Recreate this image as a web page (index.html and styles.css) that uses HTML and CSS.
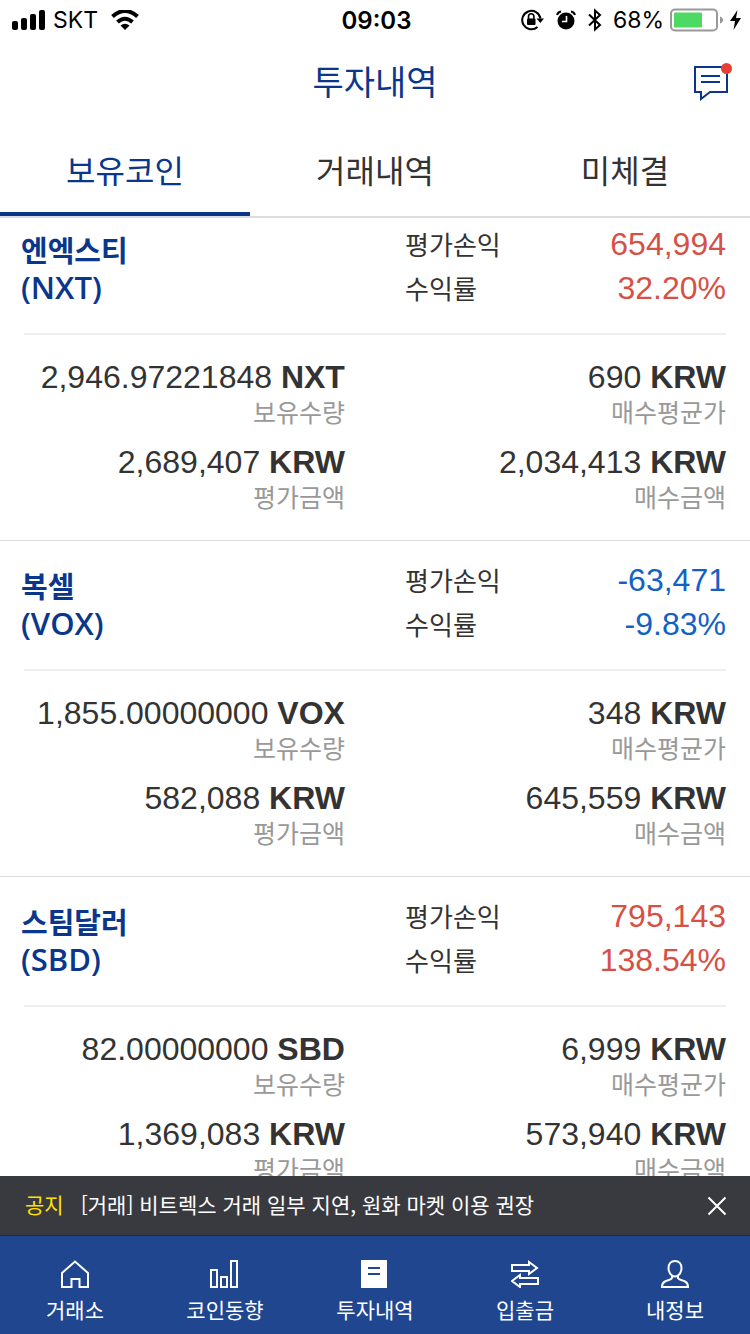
FILE: index.html
```html
<!DOCTYPE html>
<html lang="ko">

<head>
    <meta charset="UTF-8">
    <meta name="viewport" content="width=device-width, initial-scale=1.0">
    <title>투자내역</title>
    <link rel="stylesheet" href="styles.css">
</head>

<body>
    <div class="status">
        <div class="status-left">
            <svg width="34" height="20" viewBox="0 0 34 20">
                <rect x="0" y="11" width="6" height="9" rx="2" />
                <rect x="9" y="8" width="6" height="12" rx="2" />
                <rect x="18" y="4" width="6" height="16" rx="2" />
                <rect x="27" y="0" width="6" height="20" rx="2" />
            </svg>
            <span class="carrier">SKT</span>
            <svg width="28" height="20" viewBox="0 0 28 20">
                <path d="M1.5 6.5Q14-4.500 26.500 6.500M6.500 12Q14 5.500 21.500 12" fill="none" stroke="#000" stroke-width="4" />
                <path d="M9.500 15.500Q14 12 18.500 15.500L14 20z" />
            </svg>
        </div>
        <span class="time">09:03</span>
        <div class="status-right">
            <svg width="23" height="22" viewBox="0 0 23 22">
                <path d="M19.500 9.500A9.200 9.200 0 1 0 16.500 18" fill="none" stroke="#000" stroke-width="2" />
                <path d="M15.500 9.500h7.500l-3.700 4.500z" />
                <rect x="6" y="9.500" width="8.500" height="6.500" rx="1" />
                <path d="M7.500 10V7.500a2.700 2.700 0 0 1 5.400 0V10" fill="none" stroke="#000" stroke-width="1.600" />
            </svg>
            <svg class="alarm" width="20" height="20" viewBox="0 0 20 20">
                <circle cx="10" cy="11" r="8.500" />
                <path d="M1 5Q2 2 5 1.500M15 1.500Q18 2 19 5" fill="none" stroke="#000" stroke-width="2" />
                <path d="M10.500 6v5.500H6" fill="none" stroke="#fff" stroke-width="1.600" />
            </svg>
            <svg width="14" height="24" viewBox="0 0 14 24">
                <path d="M1 6.500l11 10.500-5 4.500v-19l5 4.500L1 17.500" fill="none" stroke="#000" stroke-width="2" />
            </svg>
            <span class="percent">68%</span>
            <svg width="54" height="24" viewBox="0 0 54 24">
                <rect x="1" y="1.500" width="46" height="21" rx="4" fill="none" stroke="#999" stroke-width="2" />
                <rect x="4" y="4.500" width="28" height="15" rx="1" fill="#4cd964" />
                <path d="M50 8.500q3 1 3 3.500t-3 3.500z" fill="#999" />
            </svg>
            <svg width="11" height="20" viewBox="0 0 11 20">
                <path d="M7.500 0L0 11h5L3.500 20 11 8H6z" />
            </svg>
        </div>
    </div>

    <header class="header">
        <h1>투자내역</h1>
        <button class="message" aria-label="메시지">
            <svg width="40" height="40" viewBox="0 0 40 40">
                <path d="M3 6h32v25H18l-9 7v-7H3z" fill="none" stroke="#0a378c" stroke-width="2" />
                <path d="M9 15h19M9 21h19" stroke="#0a378c" stroke-width="2" />
                <circle cx="34.500" cy="7.500" r="5.500" fill="#e93f33" />
            </svg>
        </button>
    </header>

    <div class="tabs">
        <button class="tab active">보유코인</button>
        <button class="tab">거래내역</button>
        <button class="tab">미체결</button>
    </div>

    <main class="content">
        <div class="coins">
            <section class="coin">
                <div class="coin-head">
                    <h2>엔엑스티<br><span class="ticker">(NXT)</span></h2>
                    <dl class="profit up">
                        <div><dt>평가손익</dt><dd>654,994</dd></div>
                        <div><dt>수익률</dt><dd>32.20%</dd></div>
                    </dl>
                </div>
                <dl class="amounts">
                    <div><dd>2,946.97221848 <b>NXT</b></dd><dt>보유수량</dt></div>
                    <div><dd>690 <b>KRW</b></dd><dt>매수평균가</dt></div>
                    <div><dd>2,689,407 <b>KRW</b></dd><dt>평가금액</dt></div>
                    <div><dd>2,034,413 <b>KRW</b></dd><dt>매수금액</dt></div>
                </dl>
            </section>
            <section class="coin">
                <div class="coin-head">
                    <h2>복셀<br><span class="ticker">(VOX)</span></h2>
                    <dl class="profit down">
                        <div><dt>평가손익</dt><dd>-63,471</dd></div>
                        <div><dt>수익률</dt><dd>-9.83%</dd></div>
                    </dl>
                </div>
                <dl class="amounts">
                    <div><dd>1,855.00000000 <b>VOX</b></dd><dt>보유수량</dt></div>
                    <div><dd>348 <b>KRW</b></dd><dt>매수평균가</dt></div>
                    <div><dd>582,088 <b>KRW</b></dd><dt>평가금액</dt></div>
                    <div><dd>645,559 <b>KRW</b></dd><dt>매수금액</dt></div>
                </dl>
            </section>
            <section class="coin">
                <div class="coin-head">
                    <h2>스팀달러<br><span class="ticker">(SBD)</span></h2>
                    <dl class="profit up">
                        <div><dt>평가손익</dt><dd>795,143</dd></div>
                        <div><dt>수익률</dt><dd>138.54%</dd></div>
                    </dl>
                </div>
                <dl class="amounts">
                    <div><dd>82.00000000 <b>SBD</b></dd><dt>보유수량</dt></div>
                    <div><dd>6,999 <b>KRW</b></dd><dt>매수평균가</dt></div>
                    <div><dd>1,369,083 <b>KRW</b></dd><dt>평가금액</dt></div>
                    <div><dd>573,940 <b>KRW</b></dd><dt>매수금액</dt></div>
                </dl>
            </section>
        </div>
    </main>

    <div class="notice">
        <strong>공지</strong>
        <a href="#">[거래] 비트렉스 거래 일부 지연, 원화 마켓 이용 권장</a>
        <button class="close" aria-label="닫기">
            <svg width="20" height="20" viewBox="0 0 20 20">
                <path d="M1.500 1.500l17 17M18.500 1.500l-17 17" stroke="#fff" stroke-width="2" />
            </svg>
        </button>
    </div>

    <nav class="nav">
        <a href="#">
            <svg width="30" height="28" viewBox="0 0 30 28">
                <path d="M2 13L15 1.500 28 13v14h-8.500v-8h-8v8H2z" />
            </svg>
            거래소
        </a>
        <a href="#">
            <svg width="30" height="28" viewBox="0 0 30 28">
                <path d="M1 10h6v17H1zM11 17h6v10h-6zM21 1h6v26h-6z" />
            </svg>
            코인동향
        </a>
        <a href="#" aria-current="page">
            <svg width="28" height="28" viewBox="0 0 28 28">
                <path class="page" d="M0 0h26v28H0z" />
                <path class="line" d="M7 8h12M7 14h12" />
            </svg>
            투자내역
        </a>
        <a href="#">
            <svg width="28" height="28" viewBox="0 0 28 28">
                <path d="M1 5h17V2l8 6-8 6v-3H1zM27 18H9v-3l-8 6 8 6v-3h18z" />
            </svg>
            입출금
        </a>
        <a href="#">
            <svg width="28" height="28" viewBox="0 0 28 28">
                <path d="M14 1c4 0 6.500 3 6.500 7 0 4-1.500 6-3.500 7.500V18c1 2 4 2 7 3.500 2 1 3 2 3 5.500H1c0-3.500 1-4.500 3-5.500 3-1.500 6-1.500 7-3.500v-2.500C9 14 7.500 12 7.500 8c0-4 2.500-7 6.500-7z" />
                <path d="M11 15.500q3 2 6 0" />
            </svg>
            내정보
        </a>
    </nav>
</body>

</html>
```

FILE: styles.css
```css
* {
    box-sizing: border-box;
}

body {
    display: flex;
    flex-direction: column;
    height: 100vh;
    margin: 0;
    background-color: #fff;
    color: #333;
    font-family: "Noto Sans CJK KR", sans-serif;
}

h1,
h2,
dl,
dd {
    margin: 0;
}

button {
    padding: 0;
    border: 0;
    background: none;
    color: inherit;
    font-family: inherit;
}

a {
    color: inherit;
    text-decoration: none;
}

svg {
    display: block;
}

.status {
    display: grid;
    grid-template-columns: 1fr auto 1fr;
    align-items: center;
    height: 40px;
    padding: 0 9px 0 12px;
    color: #000;
    font-family: Inter, sans-serif;
    font-size: 23px;
}

.status-left,
.status-right {
    display: flex;
    align-items: center;
}

.status-left {
    gap: 7px;
}

.carrier {
    margin-right: 6px;
}

.time {
    font-size: 24px;
    font-weight: 600;
}

.status-right {
    justify-content: flex-end;
    gap: 6px;
}

.alarm {
    margin: 0 6px;
}

.percent {
    margin-left: 5px;
}

.header {
    display: grid;
    grid-template-columns: 1fr auto 1fr;
    align-items: center;
    height: 86px;
    padding: 0 18px 4px;
    color: #0a378c;
}

.header h1 {
    grid-column: 2;
    font-size: 34px;
    font-weight: 400;
    line-height: 48px;
}

.message {
    justify-self: end;
}

.tabs {
    display: flex;
    border-bottom: 2px solid #ddd;
}

.tab {
    flex: 1;
    height: 90px;
    padding-bottom: 4px;
    border-top: 4px solid transparent;
    border-bottom: 4px solid transparent;
    font-size: 32px;
}

.tab.active {
    border-bottom-color: #0a378c;
    color: #0a378c;
}

.content {
    flex: 1;
    min-height: 0;
    overflow: hidden;
}

/* list is scrolled a little under the tabs */
.coins {
    margin-top: -13px;
}

.coin {
    border-bottom: 1px solid #ddd;
}

.coin-head {
    display: grid;
    grid-template-columns: 19fr 16fr;
    height: 130px;
    margin: 0 24px;
    border-bottom: 2px solid #eee;
}

.coin-head h2 {
    margin-left: -3px;
    padding-top: 28px;
    color: #0a378c;
    font-family: "Open Sans", "Noto Sans CJK KR", sans-serif;
    font-size: 29px;
    font-weight: 600;
    line-height: 36px;
}

.ticker {
    font-size: 31px;
}

.profit {
    padding-top: 17px;
    line-height: 44px;
}

.profit div {
    display: flex;
    justify-content: space-between;
}

.profit dt {
    font-size: 26px;
}

.profit dd,
.amounts dd {
    font-family: "Liberation Sans", sans-serif;
    font-size: 32px;
}

.up dd {
    color: #d75046;
}

.down dd {
    color: #1261c4;
}

.amounts {
    display: grid;
    grid-template-columns: 16fr 19fr;
    row-gap: 17px;
    padding: 22px 24px 30px;
    text-align: right;
}

.amounts div {
    display: flex;
    flex-direction: column;
}

.amounts dd {
    line-height: 40px;
}

.amounts dt {
    color: #999;
    font-size: 25px;
    line-height: 28px;
}

.notice {
    display: flex;
    align-items: center;
    gap: 17px;
    height: 60px;
    padding: 0 23px 0 25px;
    border-bottom: 1px solid #23282f;
    background-color: #393a3f;
    color: #fff;
    font-size: 21px;
}

.notice strong,
.notice a {
    padding-bottom: 4px;
}

.notice strong {
    color: #ffe100;
    font-weight: 400;
}

.close {
    margin-left: auto;
}

.nav {
    display: flex;
    height: 98px;
    background-color: #1f468f;
    color: #fff;
}

.nav a {
    display: flex;
    flex: 1;
    flex-direction: column;
    align-items: center;
    gap: 6px;
    padding-top: 24px;
    font-size: 21px;
    line-height: 30px;
}

.nav path {
    fill: none;
    stroke: #fff;
    stroke-width: 2;
}

.nav .page {
    fill: #fff;
    stroke: none;
}

.nav .line {
    stroke: #1f468f;
}
```
